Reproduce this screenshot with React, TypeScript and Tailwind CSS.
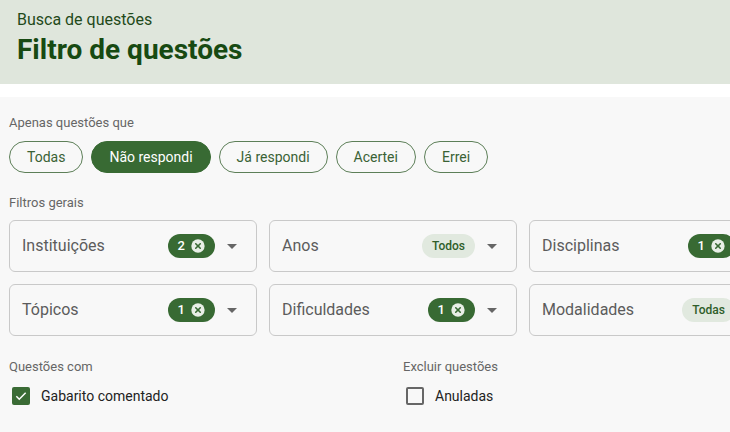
import React from 'react';

type Badge = { kind: 'count'; value: number } | { kind: 'all'; label: string };

type FilterField = {
	label: string;
	badge: Badge;
};

const answerOptions = ['Todas', 'Não respondi', 'Já respondi', 'Acertei', 'Errei'];

const filterFields: FilterField[] = [
	{ label: 'Instituições', badge: { kind: 'count', value: 2 } },
	{ label: 'Anos', badge: { kind: 'all', label: 'Todos' } },
	{ label: 'Disciplinas', badge: { kind: 'count', value: 1 } },
	{ label: 'Tópicos', badge: { kind: 'count', value: 1 } },
	{ label: 'Dificuldades', badge: { kind: 'count', value: 1 } },
	{ label: 'Modalidades', badge: { kind: 'all', label: 'Todas' } }
];

function CancelIcon() {
	return (
		<svg width="16" height="16" viewBox="0 0 24 24">
			<circle cx="12" cy="12" r="10" fill="#e8efe6" />
			<path d="M8.6 8.6l6.8 6.8M15.4 8.6l-6.8 6.8" stroke="#386a33" strokeWidth="2.4" strokeLinecap="round" />
		</svg>
	);
}

function ArrowDropDown() {
	return (
		<svg width="24" height="24" viewBox="0 0 24 24" className="shrink-0">
			<path d="M7 10l5 5 5-5z" fill="#666" />
		</svg>
	);
}

function FilterSelect({ field }: { field: FilterField }) {
	return (
		<div className="flex h-[52px] w-[248px] shrink-0 items-center rounded-md border border-[#c9c9c9] pl-[12px] pr-[12px]">
			<span className="flex-1 text-[16px] text-[#5c5c5c]">{field.label}</span>
			{field.badge.kind == 'count' ? (
				<span className="flex h-6 items-center gap-[5px] rounded-full bg-[#386a33] pl-[10px] pr-[9px] text-[13px] font-medium text-white">
					{field.badge.value}
					<CancelIcon />
				</span>
			) : (
				<span className="flex h-6 items-center rounded-full bg-[#e1e9df] px-[10px] text-[12px] font-medium text-[#2f5e2a]">
					{field.badge.label}
				</span>
			)}
			<span className="ml-[5px]">
				<ArrowDropDown />
			</span>
		</div>
	);
}

function Checkbox({ label, checked }: { label: string; checked: boolean }) {
	return (
		<label className="flex h-6 items-center">
			<span className="flex w-6 items-center justify-center">
				{checked ? (
					<span className="flex h-[18px] w-[18px] items-center justify-center rounded-[2px] bg-[#3a6b35]">
						<svg width="14" height="14" viewBox="0 0 24 24">
							<path d="M4 12.5l5 5L20 6.5" stroke="white" strokeWidth="2.6" fill="none" />
						</svg>
					</span>
				) : (
					<span className="h-[18px] w-[18px] rounded-[2px] border-2 border-[#666]" />
				)}
			</span>
			<span className="ml-[8px] text-[14px] text-[#222]">{label}</span>
		</label>
	);
}

function App() {
	const selected = 'Não respondi';

	return (
		<div className="h-[432px] w-[730px] overflow-hidden bg-white font-['Roboto',sans-serif]">
			<div id="header" className="h-[84px] bg-[#dfe6dc] pl-[17px] pt-[9px]">
				<div className="text-[16px] leading-[22px] text-[#1f4a1a]">Busca de questões</div>
				<h1 className="mt-[2px] text-[28px] font-bold leading-[34px] text-[#174a12]">Filtro de questões</h1>
			</div>
			<div id="content" className="mt-[13px] h-full bg-[#f8f8f8] pl-[9px] pt-[18px]">
				<div className="text-[13px] leading-4 text-[#666]">Apenas questões que</div>
				<div className="mt-[10px] flex gap-2">
					{answerOptions.map(opt =>
						opt == selected ? (
							<button key={opt} className="h-8 rounded-full border border-[#386a33] bg-[#386a33] px-[17px] text-[14px] text-white">
								{opt}
							</button>
						) : (
							<button key={opt} className="h-8 rounded-full border border-[#5d7f58] px-[17px] text-[14px] text-[#3a6235]">
								{opt}
							</button>
						)
					)}
				</div>
				<div className="mt-[22px] text-[13px] leading-4 text-[#666]">Filtros gerais</div>
				<div className="mt-[9px] grid w-[768px] grid-cols-[248px_248px_248px] gap-3">
					{filterFields.map(f => (
						<FilterSelect key={f.label} field={f} />
					))}
				</div>
				<div className="mt-[23px] flex">
					<div className="w-[394px]">
						<div className="text-[13px] leading-4 text-[#666]">Questões com</div>
						<div className="mt-[9px]">
							<Checkbox label="Gabarito comentado" checked={true} />
						</div>
					</div>
					<div>
						<div className="text-[13px] leading-4 text-[#666]">Excluir questões</div>
						<div className="mt-[9px]">
							<Checkbox label="Anuladas" checked={false} />
						</div>
					</div>
				</div>
			</div>
		</div>
	);
}

export default App;
